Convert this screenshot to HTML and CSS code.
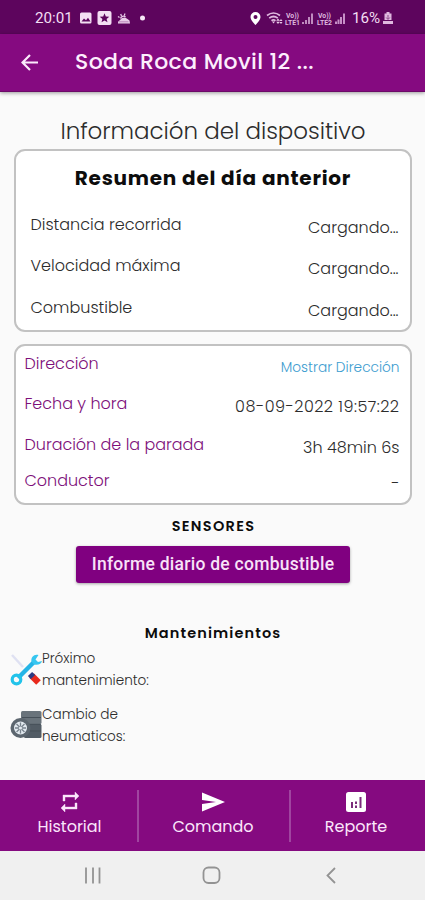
FILE: index.html
```
<!DOCTYPE html>
<html lang="es">
<head>
<meta charset="utf-8">
<title>Información del dispositivo</title>
<link rel="stylesheet" href="styles.css">
</head>
<body>
<div class="status">
  <span class="clock">20:01</span>
  <svg class="s-left" width="70" height="16" viewBox="0 0 70 16">
    <rect x="1" y="2.500" width="11.500" height="11" rx="1.500" fill="#f3dff3"/>
    <path d="M2.500 11.500l2.500-3 2 1.800 2-2.600 2.500 3.800z" fill="#5d055d"/>
    <rect x="18.500" y="1" width="14" height="14" rx="2" fill="#f3dff3"/>
    <path d="M25.500 3.300l1.300 3.200 3.500.2-2.700 2.200.9 3.400-3-1.900-3 1.900.9-3.400-2.700-2.200 3.500-.2z" fill="#5d055d"/>
    <path d="M39 13.500v-1.800l2-1.700 2-2 3-.5 2.500 1.500 2 1.500.5 3z" fill="#e9cde9"/>
    <path d="M40.500 7.500l-1.500-1M42.500 6l-.8-2M45.500 5.500l.3-2M41.500 8.500a3 3 0 0 1 5-1.500" fill="none" stroke="#e9cde9" stroke-width="1.300"/>
    <path d="M39.500 11.800h10" stroke="#a868a8" stroke-width=".7"/>
    <circle cx="63.500" cy="8" r="2.500" fill="#f7e8f7"/>
  </svg>
  <svg class="s-right" width="99" height="18" viewBox="0 0 99 18">
    <path d="M5.500 3a5 5 0 0 0-5 5c0 3.300 5 8 5 8s5-4.700 5-8a5 5 0 0 0-5-5zm0 3a2 2 0 1 1 0 4 2 2 0 0 1 0-4z" fill="#fff" fill-rule="evenodd"/>
    <g fill="none" stroke="#dfb8df" stroke-width="1.700"><path d="M17 6.500q6.500-5 13 0M19.200 9.200q4.300-3.400 8.600 0M21.500 11.700q2-1.500 4 0"/></g>
    <path d="M22 12.500h3l-1.500 2zM28 9.500l1.800 2.200h-3.600zM28 15l1.800-2.200h-3.600zM31 10l1.500 2h-3zM31 15l1.500-2h-3z" fill="#e9cde9"/>
    <g class="volte"><text x="36" y="8.600" textLength="13" lengthAdjust="spacingAndGlyphs">Vo))</text><text x="35" y="15.800" textLength="15" lengthAdjust="spacingAndGlyphs">LTE1</text><text x="68" y="8.600" textLength="13" lengthAdjust="spacingAndGlyphs">Vo))</text><text x="67" y="15.800" textLength="15" lengthAdjust="spacingAndGlyphs">LTE2</text></g>
    <path d="M53 15v-2M56 15v-4M59 15v-7M62 15V4.500" stroke="#dfb8df" stroke-width="1.500"/>
    <path d="M86 15v-2.500M88.500 15v-4.500M91 15v-7M94 15V4.500" stroke="#c78fc7" stroke-width="2"/>
  </svg>
  <span class="pct">16%</span>
  <svg class="batt" width="10" height="14" viewBox="0 0 10 14"><path d="M3.500 1h3v1.500h2V9H1.500V2.500h2zM0 10h10v3H0z" fill="#dfb8df"/><path d="M5 4v4M3.200 6.500L5 8.500l1.800-2" stroke="#8b4a8b" fill="none"/></svg>
</div>
<header class="appbar">
  <svg width="18" height="18" viewBox="0 0 18 18"><path d="M17 9.500H2M9 2L1.500 9.500 9 17" fill="none" stroke="#fbeafb" stroke-width="2.200"/></svg>
  <h1>Soda Roca Movil 12 ...</h1>
</header>
<main>
  <h2 class="page-title">Información del dispositivo</h2>
  <section class="card summary">
    <h3>Resumen del día anterior</h3>
    <div class="row"><span>Distancia recorrida</span><b>Cargando...</b></div>
    <div class="row"><span>Velocidad máxima</span><b>Cargando...</b></div>
    <div class="row"><span>Combustible</span><b>Cargando...</b></div>
  </section>
  <section class="card details">
    <div class="row"><span>Dirección</span><a>Mostrar Dirección</a></div>
    <div class="row"><span>Fecha y hora</span><b class="date">08-09-2022 19:57:22</b></div>
    <div class="row"><span>Duración de la parada</span><b>3h 48min 6s</b></div>
    <div class="row last"><span>Conductor</span><b class="dash">-</b></div>
  </section>
  <h4 class="sensors">SENSORES</h4>
  <button class="report">Informe diario de combustible</button>
  <h4 class="maint-title">Mantenimientos</h4>
  <div class="maint">
    <svg width="32" height="34" viewBox="0 0 32 34">
      <path d="M2 2l11 12" stroke="#dfe1f2" stroke-width="2.500"/>
      <path d="M21.500 22.500l7 7" stroke="#e8291c" stroke-width="6.500"/>
      <path d="M20 21l3 3" stroke="#2b3a82" stroke-width="6"/>
      <path d="M8 25L24 9" stroke="#25b4e6" stroke-width="4.500"/>
      <circle cx="6.500" cy="26.500" r="4.300" fill="none" stroke="#22c3ea" stroke-width="3.200"/>
      <path d="M28.500 2c-4-1.500-8 2-7 6.500l2.500 3c4 1 7.500-.5 8-3.500l-4 1-2.500-2.500z" fill="#36c6f0"/>
    </svg>
    <p>Próximo mantenimiento:</p>
  </div>
  <div class="maint">
    <svg width="32" height="34" viewBox="0 0 32 34">
      <rect x="11" y="2" width="20.500" height="13" rx="1.500" fill="#69737b"/>
      <rect x="14" y="15" width="17.500" height="14" rx="1.500" fill="#525c65"/>
      <path d="M12 8.500h19M18 15.300h13M19 22h12" stroke="#465059" stroke-width="1"/>
      <circle cx="10.500" cy="19" r="10" fill="#5c666f"/>
      <circle cx="10.500" cy="19" r="6.500" fill="#e3eaf0"/>
      <path d="M10.500 13.500v11M5 19h11M6.500 15l8 8M14.500 15l-8 8" stroke="#78838d" stroke-width="1.300"/>
      <circle cx="10.500" cy="19" r="1.600" fill="#e3eaf0"/>
    </svg>
    <p>Cambio de neumaticos:</p>
  </div>
</main>
<nav class="tabs">
  <div class="tab"><svg width="24" height="24" viewBox="0 0 24 24"><path d="M7 7h10v3l4-4-4-4v3H5v6h2zm10 10H7v-3l-4 4 4 4v-3h12v-6h-2z" fill="#fbe6fb" stroke="#fbe6fb" stroke-width=".4"/></svg><span>Historial</span></div>
  <div class="tab"><svg width="26" height="24" viewBox="0 0 26 24"><path d="M2 2.500L25 12 2 21.500V14l14-2-14-2z" fill="#fff"/></svg><span>Comando</span></div>
  <div class="tab"><svg width="24" height="24" viewBox="0 0 24 24"><rect x="2" y="2" width="20" height="20" rx="2.500" fill="#fff"/><path d="M8 12v6M12 15.500V18M12 11.500v2.500M16.500 7v11" stroke="#7b2b7b" stroke-width="2"/></svg><span>Reporte</span></div>
</nav>
<footer class="sysnav">
  <svg width="425" height="49" viewBox="0 0 425 49" fill="none" stroke="#939393" stroke-width="1.800"><path d="M86 16.500v16M93 16.500v16M99.500 16.500v16"/><rect x="203.500" y="16.500" width="16" height="15.500" rx="5"/><path d="M335 17l-7.500 7.500 7.500 7.500"/></svg>
</footer>
</body>
</html>
```
FILE: styles.css
```
* { box-sizing: border-box; }
body {
  margin: 0;
  height: 900px;
  overflow: hidden;
  display: flex;
  flex-direction: column;
  background: #fafafa;
  color: #2c2c2c;
  font: 300 16px/24px Poppins, Inter, sans-serif;
}
h1, h2, h3, h4, p { margin: 0; }
svg { display: block; flex: none; }
.status {
  height: 34px;
  flex: none;
  display: flex;
  align-items: center;
  padding: 1px 0 0 35px;
  background: #5d055d;
  color: #f3dff3;
  font: 400 15.200px/20px Roboto, sans-serif;
}
.clock { width: 38px; }
.s-left { margin-left: 6px; }
.s-right { margin-left: 101px; }
.volte { font: 700 7px Roboto, sans-serif; fill: #dfb8df; }
.pct { margin-left: 3px; width: 28px; }
.batt { margin-left: 3px; }
.appbar {
  height: 58px;
  flex: none;
  display: flex;
  align-items: center;
  padding: 0 0 1px 21px;
  background: #850a80;
  border-bottom: 1px solid #6c0a68;
  box-shadow: 0 1px 4px rgba(0, 0, 0, .4);
}
.appbar h1 {
  margin-left: 36px;
  font-size: 22px;
  font-weight: 500;
  letter-spacing: .4px;
  color: #fdeefd;
}
main {
  flex: 1;
  display: flex;
  flex-direction: column;
  align-items: center;
}
.page-title {
  margin-top: 24px;
  padding-left: 1px;
  font-size: 23px;
  line-height: 30px;
  font-weight: 300;
  letter-spacing: -.05px;
}
.card {
  width: 398px;
  background: #fff;
  border: 2px solid #c2c2c2;
  border-radius: 11px;
}
.row {
  display: flex;
  justify-content: space-between;
  align-items: flex-start;
}
.row b { font-weight: 300; padding-top: 3px; }
.summary { margin-top: 3px; height: 183px; padding: 13px 11px 0 15px; }
.summary h3 {
  height: 49px;
  margin-right: 3px;
  text-align: center;
  font-size: 20px;
  line-height: 28px;
  font-weight: 700;
  letter-spacing: .75px;
  color: #0c0c0c;
}
.summary .row { height: 41.400px; }
.details { margin-top: 12px; height: 161px; padding: 5.500px 10px 0 9px; }
.details .row { height: 41px; }
.details .row:first-child { height: 40px; }
.details .row:nth-child(3) { height: 36px; }
.details .row span { color: #7d0f7a; letter-spacing: -.02px; }
.details a { color: #3c9ccf; font-size: 13.700px; padding-top: 4px; }
.details .date { letter-spacing: .48px; }
.sensors, .maint-title {
  font-size: 14.500px;
  line-height: 24px;
  font-weight: 600;
  color: #0c0c0c;
}
.sensors { margin-top: 9px; padding-left: 2px; letter-spacing: 1.300px; }
.report {
  margin-top: 8px;
  margin-left: 1px;
  width: 274px;
  height: 37px;
  flex: none;
  border: 0;
  border-radius: 3px;
  padding: 0;
  background: #800080;
  color: #f8e2f8;
  font: 500 17.500px/37px Roboto, sans-serif;
  letter-spacing: .26px;
  box-shadow: 0 1px 3px rgba(0, 0, 0, .35);
}
.maint-title { margin-top: 38px; letter-spacing: 1.100px; padding-left: 1px; }
.maint {
  align-self: stretch;
  display: flex;
  align-items: center;
  height: 56px;
  margin-top: -3px;
  padding-left: 10px;
}
.maint + .maint { margin-top: 0; }
.maint p { width: 110px; font-size: 13.600px; line-height: 22.500px; }
.tabs {
  height: 71px;
  flex: none;
  display: grid;
  grid-template-columns: 137px 152px 136px;
  align-items: center;
  background: #850a80;
}
.tab {
  height: 52px;
  display: flex;
  flex-direction: column;
  align-items: center;
  border-left: 2px solid #a045a0;
  color: #fbe6fb;
  font-weight: 400;
}
.tab:first-child { border-left: 0; padding-left: 2px; }
.tab:nth-child(2) { padding-right: 2px; }
.tab:last-child { padding-right: 4px; }
.tab span { line-height: 24px; margin-top: 1px; }
.sysnav { height: 49px; flex: none; background: #f0f0f0; }
```
